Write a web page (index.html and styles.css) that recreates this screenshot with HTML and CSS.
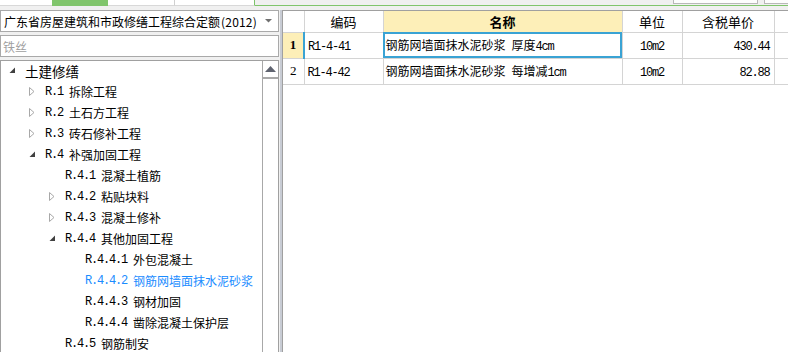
FILE: index.html
```html
<!DOCTYPE html>
<html>
<head>
<meta charset="utf-8">
<link rel="stylesheet" href="styles.css">
</head>
<body>
<div class="page">
  <div class="topbar">
    <div class="tab t1"></div>
    <div class="tab t2"></div>
    <div class="tab t3"></div>
    <div class="tab t4"></div>
    <div class="toprest">
      <div class="btn b1"></div>
      <div class="btn b2"></div>
    </div>
  </div>
  <div class="main">
    <div class="left">
      <div class="select">
        <span class="select-text">广东省房屋建筑和市政修缮工程综合定额<span class="yr">(2012)</span></span>
        <svg class="caret" width="7" height="4" viewBox="0 0 7 4"><polygon points="0,0 7,0 3.5,3.5" fill="#707070"/></svg>
      </div>
      <div class="search"><span class="ph">铁丝</span></div>
      <div class="tree">
        <div class="tree-list">
          <div class="node l0 root"><span class="tw"><svg width="7" height="7" viewBox="0 0 7 7"><polygon points="6,0.5 6,6 0.5,6" fill="#404040"/></svg></span><span class="label">土建修缮</span></div>
          <div class="node l1"><span class="tw"><svg width="7" height="9" viewBox="0 0 7 9"><polygon points="0.5,0.5 5,4.5 0.5,8.5" fill="none" stroke="#a8a8a8"/></svg></span><span class="label"><span class="en code">R.1</span>拆除工程</span></div>
          <div class="node l1"><span class="tw"><svg width="7" height="9" viewBox="0 0 7 9"><polygon points="0.5,0.5 5,4.5 0.5,8.5" fill="none" stroke="#a8a8a8"/></svg></span><span class="label"><span class="en code">R.2</span>土石方工程</span></div>
          <div class="node l1"><span class="tw"><svg width="7" height="9" viewBox="0 0 7 9"><polygon points="0.5,0.5 5,4.5 0.5,8.5" fill="none" stroke="#a8a8a8"/></svg></span><span class="label"><span class="en code">R.3</span>砖石修补工程</span></div>
          <div class="node l1"><span class="tw"><svg width="7" height="7" viewBox="0 0 7 7"><polygon points="6,0.5 6,6 0.5,6" fill="#404040"/></svg></span><span class="label"><span class="en code">R.4</span>补强加固工程</span></div>
          <div class="node l2"><span class="tw"></span><span class="label"><span class="en code">R.4.1</span>混凝土植筋</span></div>
          <div class="node l2"><span class="tw"><svg width="7" height="9" viewBox="0 0 7 9"><polygon points="0.5,0.5 5,4.5 0.5,8.5" fill="none" stroke="#a8a8a8"/></svg></span><span class="label"><span class="en code">R.4.2</span>粘贴块料</span></div>
          <div class="node l2"><span class="tw"><svg width="7" height="9" viewBox="0 0 7 9"><polygon points="0.5,0.5 5,4.5 0.5,8.5" fill="none" stroke="#a8a8a8"/></svg></span><span class="label"><span class="en code">R.4.3</span>混凝土修补</span></div>
          <div class="node l2"><span class="tw"><svg width="7" height="7" viewBox="0 0 7 7"><polygon points="6,0.5 6,6 0.5,6" fill="#404040"/></svg></span><span class="label"><span class="en code">R.4.4</span>其他加固工程</span></div>
          <div class="node l3"><span class="tw"></span><span class="label"><span class="en code">R.4.4.1</span>外包混凝土</span></div>
          <div class="node l3 active"><span class="tw"></span><span class="label"><span class="en code">R.4.4.2</span>钢筋网墙面抹水泥砂浆</span></div>
          <div class="node l3"><span class="tw"></span><span class="label"><span class="en code">R.4.4.3</span>钢材加固</span></div>
          <div class="node l3"><span class="tw"></span><span class="label"><span class="en code">R.4.4.4</span>凿除混凝土保护层</span></div>
          <div class="node l2"><span class="tw"></span><span class="label"><span class="en code">R.4.5</span>钢筋制安</span></div>
        </div>
        <div class="vscroll">
          <div class="sb-up"><svg width="11" height="6" viewBox="0 0 11 6"><polygon points="5.5,0 11,6 0,6" fill="#606470"/></svg></div>
        </div>
      </div>
    </div>
    <div class="splitter"></div>
    <div class="right">
      <table class="grid">
        <colgroup>
          <col class="c-no"><col class="c-code"><col class="c-name"><col class="c-unit"><col class="c-price"><col class="c-rest">
        </colgroup>
        <thead>
          <tr>
            <th></th><th>编码</th><th class="hl bold">名称</th><th>单位</th><th>含税单价</th><th></th>
          </tr>
        </thead>
        <tbody>
          <tr>
            <td class="no cur">1</td><td class="code"><span class="en">R1-4-41</span></td><td class="name sel">钢筋网墙面抹水泥砂浆<span class="gap"></span>厚度<span class="en">4cm</span></td><td class="unit"><span class="en">10m2</span></td><td class="price"><span class="en">430.44</span></td><td></td>
          </tr>
          <tr>
            <td class="no">2</td><td class="code"><span class="en">R1-4-42</span></td><td class="name">钢筋网墙面抹水泥砂浆<span class="gap"></span>每增减<span class="en">1cm</span></td><td class="unit"><span class="en">10m2</span></td><td class="price"><span class="en">82.88</span></td><td></td>
          </tr>
        </tbody>
      </table>
    </div>
  </div>
</div>
</body>
</html>
```

FILE: styles.css
```css
* { box-sizing: border-box; }
html, body { margin: 0; padding: 0; }
body {
  width: 788px;
  height: 352px;
  overflow: hidden;
  background: #f0f0f0;
  font-family: "Noto Sans CJK SC", "Noto Sans", sans-serif;
  font-size: 12px;
  color: #000;
}
.page { width: 788px; height: 352px; display: flex; flex-direction: column; }

.topbar { height: 6px; display: flex; flex: none; }
.tab { height: 6px; border-bottom: 1px solid #d8d8d8; background: #fff; }
.t1 { width: 52px; }
.t2 { width: 56px; background: #80c56c; border-bottom-color: #80c56c; }
.t3 { width: 67px; border-right: 1px solid #d0d0d0; }
.t4 { width: 80px; border-right: 1px solid #7cc36a; }
.toprest {
  flex: 1;
  height: 6px;
  background: #f0f0f0;
  border-bottom: 1px solid #80c56c;
  position: relative;
}
.btn {
  position: absolute;
  top: 0;
  height: 4px;
  background: #fdfdfd;
  border: 1px solid #b8b8b8;
  border-top: none;
}
.b1 { left: 418px; width: 85px; }
.b2 { left: 509px; width: 40px; }

.main { flex: 1; display: flex; padding-top: 4px; min-height: 0; }

.left { width: 280px; display: flex; flex-direction: column; gap: 3px; flex: none; }
.select {
  height: 22px;
  width: 279px;
  background: #fff;
  border: 1px solid #a9a9a9;
  display: flex;
  align-items: center;
  justify-content: space-between;
  padding: 0 6px 0 3px;
}
.select-text { font-size: 12px; white-space: nowrap; }
.yr { margin-left: 1px; letter-spacing: 0.2px; }
.caret { flex: none; }
.search {
  height: 22px;
  width: 279px;
  background: #fff;
  border: 1px solid #a9a9a9;
  display: flex;
  align-items: center;
  padding-left: 2px;
}
.ph { color: #a0a0a0; font-size: 12px; }

.tree {
  flex: 1;
  width: 279px;
  background: #fff;
  border: 1px solid #a0a0a0;
  border-bottom: none;
  display: flex;
  min-height: 0;
  overflow: hidden;
}
.tree-list { flex: 1; margin-top: -1px; }
.node { height: 21px; display: flex; align-items: center; white-space: nowrap; }
.tw { width: 16px; flex: none; display: flex; align-items: center; }
.l0 { padding-left: 8px; }
.l1 { padding-left: 28px; }
.l2 { padding-left: 48px; }
.l3 { padding-left: 68px; }
.root .label { font-size: 13.5px; }
.label { font-size: 12px; display: flex; align-items: center; }
.active .label { color: #1a8cff; }
.en {
  font-family: "Liberation Mono", monospace;
  font-size: 12px;
  letter-spacing: -1.2px;
}
.code { margin-right: 6px; }
.gap { display: inline-block; width: 6px; }

.vscroll {
  width: 16px;
  flex: none;
  border-left: 1px solid #a8a8a8;
  background: #fff;
}
.sb-up {
  height: 18px;
  border-bottom: 2px solid #a8a8a8;
  display: flex;
  align-items: center;
  justify-content: center;
}

.splitter {
  width: 2px;
  flex: none;
  background: #c8ccd4;
}

.right {
  flex: 1;
  background: #fff;
  border-left: 1px solid #a0a0a0;
  border-top: 1px solid #a0a0a0;
  overflow: hidden;
}
.grid {
  border-collapse: collapse;
  table-layout: fixed;
  width: 520px;
}
.c-no { width: 21px; }
.c-code { width: 79px; }
.c-name { width: 239px; }
.c-unit { width: 60px; }
.c-price { width: 92px; }
.c-rest { width: 29px; }
.grid th, .grid td {
  border: 1px solid #d4d4d4;
  padding: 0;
  white-space: nowrap;
  overflow: hidden;
}
.grid tr > :first-child { border-left: none; }
.grid thead th {
  height: 21px;
  font-weight: normal;
  font-size: 13px;
  text-align: center;
  border-top: none;
}
.grid th.hl { background: #fdefb8; }
.grid th.bold { font-weight: bold; }
.grid td { height: 26px; font-size: 12px; }
.grid td.no { text-align: center; font-family: "Liberation Serif", serif; font-size: 13px; }
.grid td.no.cur { background: #fdefb8; font-weight: bold; border-right: 2px solid #3aa3d4; }
.grid td.code { padding-left: 3px; }
.grid td.name { padding-left: 2px; }
.grid td.name.sel { outline: 2px solid #3aa3d4; outline-offset: -2px; }
.grid td.unit { text-align: center; }
.grid td.price { text-align: right; padding-right: 4px; }
```
